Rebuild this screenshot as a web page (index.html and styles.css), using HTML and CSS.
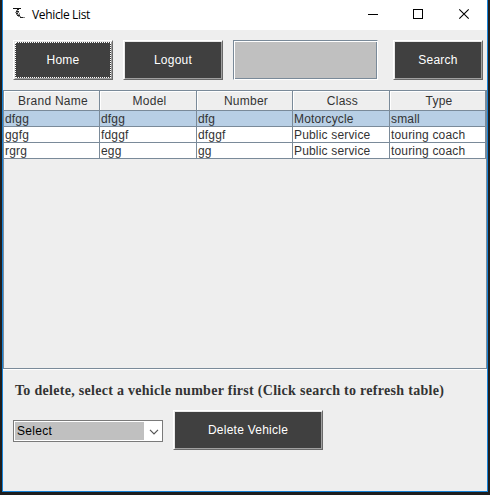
FILE: index.html
```
<!DOCTYPE html>
<html lang="en">
<head>
<meta charset="utf-8">
<title>Vehicle List</title>
<link rel="stylesheet" href="styles.css">
</head>
<body>
<div class="window">
  <header class="titlebar">
    <svg class="app-icon" width="12" height="11" viewBox="0 0 12 11" shape-rendering="crispEdges">
      <path d="M0 .5h8" stroke="#111"/>
      <path d="M4 1h2v1H4zM3 3h3v1H3zM3 5h2v1H3zM4 7h3v1H4zM7 9h3v1H7z" fill="#222"/>
      <path d="M3 2h2v1H3zM2 4h3v1H2zM5 4h1v1H5zM3 6h3v1H3zM5 8h3v1H5zM10 9h2v1h-2zM6 5h1v2H6z" fill="#888"/>
    </svg>
    <h1 class="title">Vehicle List</h1>
    <svg class="controls" width="104" height="12" viewBox="0 0 104 12" fill="none" stroke="#000">
      <path d="M0 6.5h10M45.500 1.500h9v9h-9z" shape-rendering="crispEdges"/>
      <path d="M91.300 1.300l9.400 9.400M100.700 1.300l-9.400 9.400" stroke-width="1.100"/>
    </svg>
  </header>
  <div class="toolbar">
    <button class="btn focused"><span>Home</span></button>
    <button class="btn"><span>Logout</span></button>
    <input class="search-field" type="text" aria-label="Search">
    <button class="btn btn-search"><span>Search</span></button>
  </div>
  <div class="scroll-pane">
    <table class="grid">
      <colgroup><col class="narrow"><col class="wide"><col class="narrow"><col class="wide"><col class="narrow"></colgroup>
      <thead>
        <tr><th>Brand Name</th><th>Model</th><th>Number</th><th>Class</th><th>Type</th></tr>
      </thead>
      <tbody>
        <tr class="selected"><td>dfgg</td><td>dfgg</td><td>dfg</td><td>Motorcycle</td><td>small</td></tr>
        <tr><td>ggfg</td><td>fdggf</td><td>dfggf</td><td>Public service</td><td>touring coach</td></tr>
        <tr><td>rgrg</td><td>egg</td><td>gg</td><td>Public service</td><td>touring coach</td></tr>
      </tbody>
    </table>
  </div>
  <p class="hint">To delete, select a vehicle number first (Click search to refresh table)</p>
  <div class="actions">
    <div class="combo">
      <span class="combo-value">Select</span>
      <svg class="chevron" width="10" height="6" viewBox="0 0 10 6" fill="none" stroke="#555" stroke-width="1.200"><path d="M1 .8l4 4 4-4"/></svg>
    </div>
    <button class="btn btn-delete"><span>Delete Vehicle</span></button>
  </div>
</div>
</body>
</html>
```

FILE: styles.css
```
* { box-sizing: border-box; }
body {
  margin: 0;
  height: 495px;
  padding: 0 2px 3px;
  background: #1e1e1e;
  overflow: hidden;
  font: 12px/15px "Liberation Sans", Arial, sans-serif;
  color: #333;
}
.window {
  height: 492px;
  border: 1px solid #1883d7;
  border-top: 0;
  background: #eee;
}
.titlebar {
  display: flex;
  height: 30px;
  padding: 8px 15px 0 10px;
  background: #fff;
}
.title {
  margin: -1px 0 0 7px;
  font: 12px/16px "Open Sans", "Noto Sans", sans-serif;
  letter-spacing: -0.35px;
  color: #000;
}
.controls { margin: 0 0 0 auto; }
.toolbar {
  display: flex;
  gap: 10px;
  height: 60px;
  padding: 10px 4px 10px 10px;
}
.btn {
  flex: none;
  width: 100px;
  height: 40px;
  padding: 0;
  border: 1px solid;
  border-color: #fff #696969 #696969 #fff;
  background: #404040;
  box-shadow: inset 1px 1px #e8e8e8, inset -1px -1px #a0a0a0;
  font: inherit;
  letter-spacing: 0.25px;
  color: #fff;
}
.focused { padding: 1px; }
.focused span {
  display: flex;
  align-items: center;
  justify-content: center;
  height: 36px;
  border: 1px dotted #fff;
}
.search-field {
  flex: none;
  width: 145px;
  height: 40px;
  border: 1px solid;
  border-color: #7a8a99 #fff #fff #7a8a99;
  background: #c0c0c0;
  box-shadow: inset 1px 1px #fff, inset -1px -1px #7a8a99;
}
.btn-search { width: 90px; margin-left: 5px; }
.scroll-pane {
  height: 279px;
  border: 1px solid #7a8a99;
  box-shadow: 0 1px #fff;
}
.grid {
  width: 482px;
  table-layout: fixed;
  border-collapse: separate;
  border-spacing: 0;
}
.narrow { width: 96px; }
.wide { width: 97px; }
th, td {
  border: solid #7a8a99;
  border-width: 0 1px 1px 0;
  white-space: nowrap;
}
th {
  height: 20px;
  padding: 2px 0 0 3px;
  font-weight: normal;
  letter-spacing: 0.25px;
  line-height: 17px;
  box-shadow: inset 1px 1px #fff;
}
td {
  height: 16px;
  padding: 1px 0 0 1px;
  background: #fff;
  letter-spacing: 0.17px;
  line-height: 14px;
}
.selected td { background: #b8cfe5; }
.hint {
  margin: 13px 0 0 12px;
  font: bold 14px/17px "Liberation Serif", "Times New Roman", serif;
  letter-spacing: 0.29px;
  white-space: nowrap;
}
.actions {
  display: flex;
  gap: 10px;
  padding: 11px 10px 0;
}
.combo {
  display: flex;
  width: 150px;
  height: 22px;
  margin-top: 10px;
  padding: 1px;
  border: 1px solid #7a7a7a;
  background: #fff;
  letter-spacing: 0.3px;
  color: #000;
}
.combo-value {
  width: 129px;
  padding-left: 2px;
  background: #c0c0c0;
  line-height: 18px;
}
.chevron { margin: 7px 0 0 5px; }
.btn-delete { width: 150px; }
```
